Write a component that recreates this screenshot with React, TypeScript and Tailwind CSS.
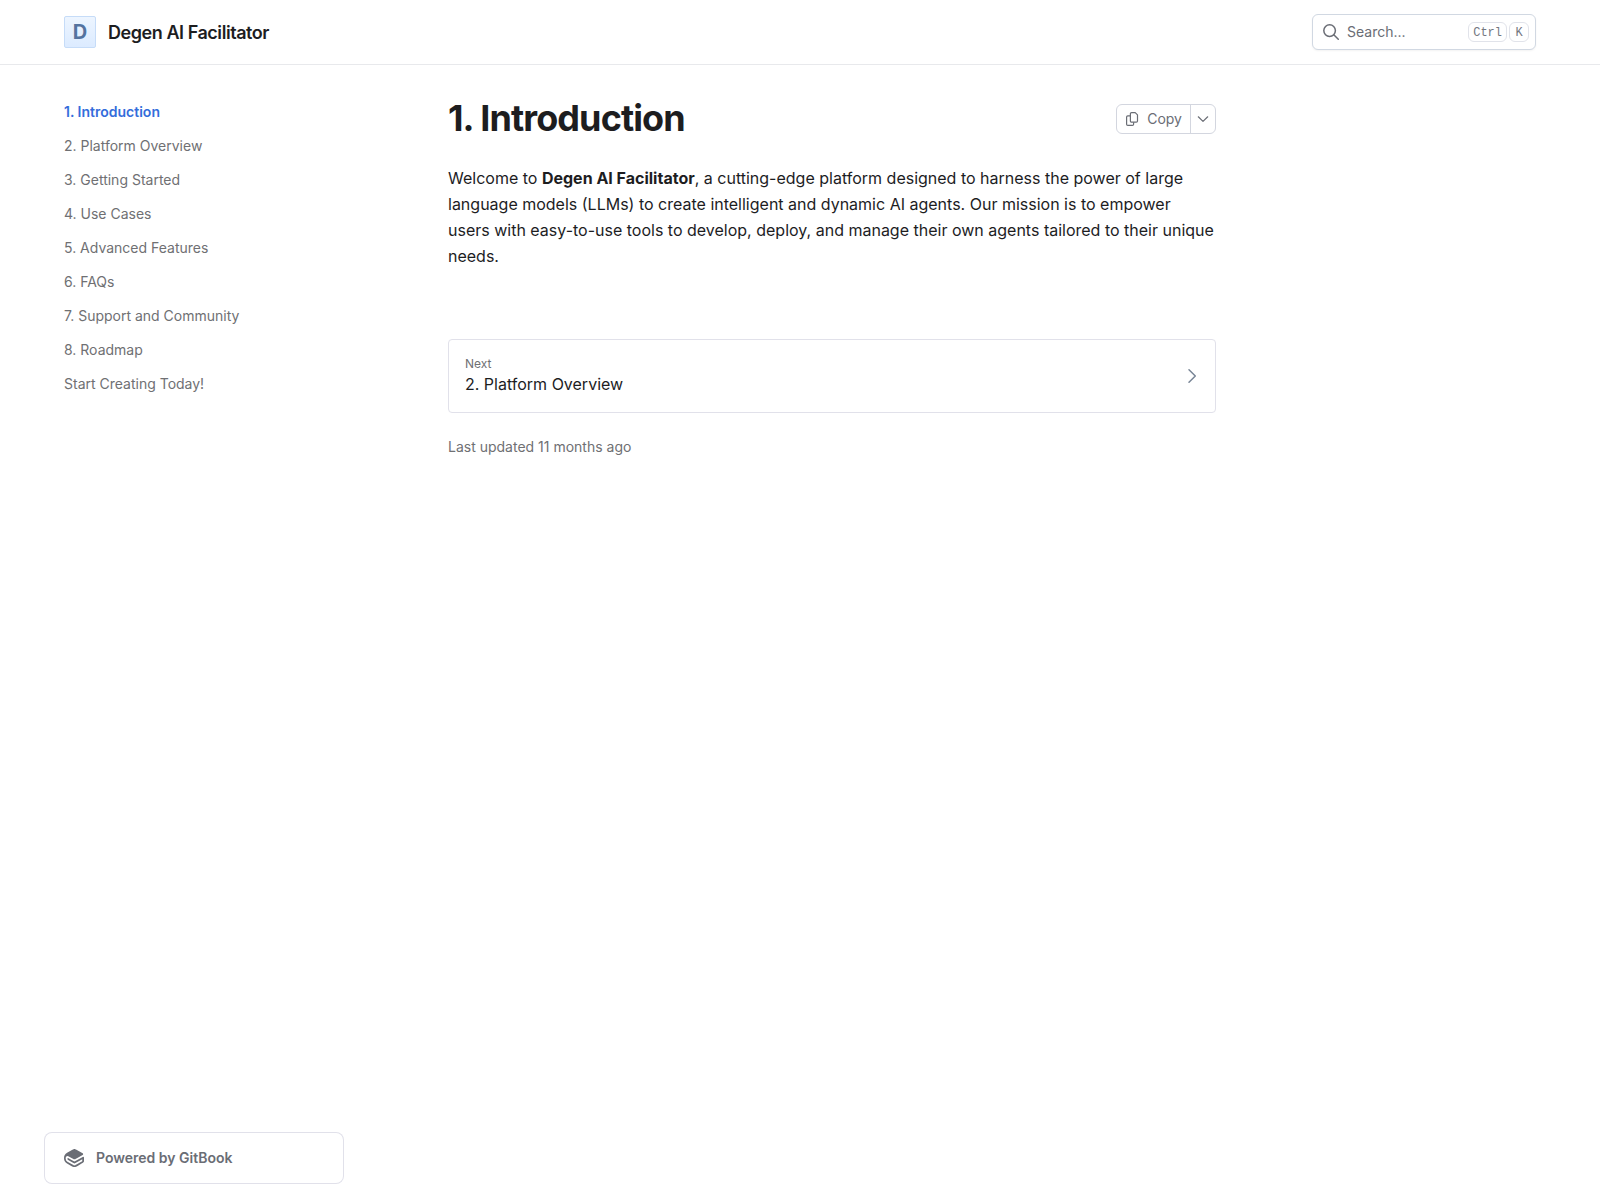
import { clsx } from "clsx";
import { SiGitbook } from "react-icons/si";

const pages = [
  "1. Introduction",
  "2. Platform Overview",
  "3. Getting Started",
  "4. Use Cases",
  "5. Advanced Features",
  "6. FAQs",
  "7. Support and Community",
  "8. Roadmap",
  "Start Creating Today!",
];

function SearchIcon() {
  return (
    <svg viewBox="0 0 16 16" className="size-4 shrink-0" fill="none" stroke="currentColor" strokeWidth="1.5" strokeLinecap="round" aria-hidden="true">
      <circle cx="6.6" cy="6.6" r="5.8" />
      <path d="M10.8 10.8 15.3 15.3" />
    </svg>
  );
}

function CopyIcon() {
  return (
    <svg viewBox="0 0 14 14" className="size-3.5 shrink-0" fill="none" stroke="currentColor" strokeWidth="1.2" strokeLinejoin="round" aria-hidden="true">
      <path d="M6.6.6h3.6l2.3 2.3v6.1a1.2 1.2 0 0 1-1.2 1.2H6.6A1.2 1.2 0 0 1 5.4 9V1.8A1.2 1.2 0 0 1 6.6.6Z" />
      <path d="M5.4 3.9H2.8a1.2 1.2 0 0 0-1.2 1.2v7.1a1.2 1.2 0 0 0 1.2 1.2h4.6a1.2 1.2 0 0 0 1.2-1.2v-2" />
    </svg>
  );
}

function Header() {
  return (
    <header className="sticky top-0 z-10 bg-white shadow-[0_1px_0_#e8e9ec]">
      <div className="flex h-16 items-center justify-between px-16">
        <a href="#" className="flex items-center gap-3">
          <span className="flex size-8 items-center justify-center rounded-xs border border-[#c6dcf8] bg-linear-to-b from-[#edf5ff] to-[#dcebff] text-xl leading-none font-bold text-[#54739f]">
            D
          </span>
          <span className="text-lg leading-[25px] font-semibold tracking-tight text-[#1d1d1f]">Degen AI Facilitator</span>
        </a>
        <label className="flex h-9 w-56 items-center gap-2 rounded-md border border-[#d1d8e2] bg-white pr-1.5 pl-2.5 text-[#6a6d75] shadow-xs">
          <SearchIcon />
          <input
            type="text"
            aria-label="Search"
            placeholder="Search..."
            className="min-w-0 flex-1 text-sm outline-none placeholder:text-[#6a6d75]"
          />
          <span className="flex gap-0.5 font-['Liberation_Mono',monospace] text-xs font-normal text-[#74777f]">
            <kbd className="flex h-5 items-center rounded-md border border-[#e1e3ea] px-1 pt-0.5 [font-family:inherit]">Ctrl</kbd>
            <kbd className="flex h-5 w-5 items-center justify-center rounded-md border border-[#e1e3ea] pt-0.5 [font-family:inherit]">K</kbd>
          </span>
        </label>
      </div>
    </header>
  );
}

function Sidebar() {
  return (
    <aside className="sticky top-16 flex h-[calc(100vh-4rem)] w-75 shrink-0 flex-col justify-between pt-8 pb-4">
      <nav aria-label="Pages">
        <ul className="flex flex-col gap-0.5 px-5">
          {pages.map((page, i) => (
            <li key={page}>
              <a
                href="#"
                aria-current={i === 0 ? "page" : undefined}
                className={clsx("block py-1.5 text-sm", i === 0 ? "font-semibold text-[#346ddb]" : "text-[#6f7073]")}
              >
                {page}
              </a>
            </li>
          ))}
        </ul>
      </nav>
      <a
        href="#"
        className="flex items-center gap-3 rounded-lg px-5 py-4 text-sm leading-5 font-semibold text-[#6a6d75] ring-1 ring-[#e1e1ea] ring-inset"
      >
        <SiGitbook className="size-5" aria-hidden="true" />
        Powered by GitBook
      </a>
    </aside>
  );
}

function CopyMenu() {
  return (
    <div className="flex h-[30px] items-stretch rounded-md border border-[#d3d6df] text-[#6a6d75]">
      <button type="button" className="flex items-center gap-2 px-2 text-sm">
        <CopyIcon />
        Copy
      </button>
      <button type="button" aria-label="More actions" className="flex w-[25px] items-center justify-center border-l border-[#d3d6df]">
        <svg viewBox="0 0 12 12" className="size-3" fill="none" stroke="currentColor" strokeWidth="1.2" strokeLinecap="round" strokeLinejoin="round" aria-hidden="true">
          <path d="m1.3 3.8 4.7 4.6 4.7-4.6" />
        </svg>
      </button>
    </div>
  );
}

export default function App() {
  return (
    <div className="min-h-screen bg-white font-['Inter',sans-serif] text-[#1d1d1f]">
      <Header />
      <div className="flex gap-26 pr-16 pl-11">
        <Sidebar />
        <main className="min-w-0 max-w-3xl flex-1 pt-8">
          <div className="flex items-center justify-between">
            <h1 className="text-4xl leading-[45px] font-bold tracking-tight">1. Introduction</h1>
            <CopyMenu />
          </div>
          <p className="mt-6 text-base leading-[26px]">
            Welcome to <strong className="font-bold">Degen AI Facilitator</strong>, a cutting-edge platform designed to
            harness the power of large language models (LLMs) to create intelligent and dynamic AI agents. Our mission
            is to empower users with easy-to-use tools to develop, deploy, and manage their own agents tailored to their
            unique needs.
          </p>
          <a href="#" className="mt-[70px] flex items-center justify-between rounded-sm border border-[#e1e1ea] p-4">
            <span className="flex flex-col">
              <span className="text-xs text-[#6f7073]">Next</span>
              <span className="text-base">2. Platform Overview</span>
            </span>
            <svg viewBox="0 0 16 16" className="size-4 text-[#788596]" fill="none" stroke="currentColor" strokeWidth="1.5" strokeLinecap="round" strokeLinejoin="round" aria-hidden="true">
              <path d="m6 1.8 6.3 6.2L6 14.2" />
            </svg>
          </a>
          <p className="mt-6 text-sm text-[#6f7073]">Last updated 11 months ago</p>
        </main>
      </div>
    </div>
  );
}
